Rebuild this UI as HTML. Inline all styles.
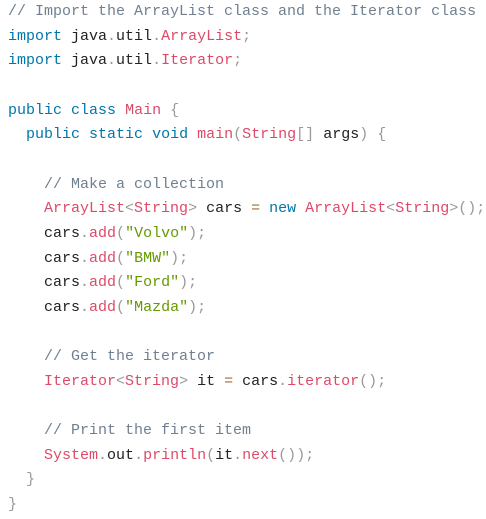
<!DOCTYPE html>
<html><head><style>
html,body{margin:0;padding:0;background:#fff;width:486px;height:519px;overflow:hidden}
pre{margin:0;padding:0 0 0 8px;position:relative;top:0px;font-family:"Liberation Mono",monospace;font-size:15px;line-height:24.65px;color:#222;white-space:pre}
.c{color:#708090}.k{color:#07a}.f{color:#dd4a68}.p{color:#999}.s{color:#690}.o{color:#9a6e3a}
</style></head><body>
<pre><span class="c">// Import the ArrayList class and the Iterator class</span>
<span class="k">import</span> java<span class="p">.</span>util<span class="p">.</span><span class="f">ArrayList</span><span class="p">;</span>
<span class="k">import</span> java<span class="p">.</span>util<span class="p">.</span><span class="f">Iterator</span><span class="p">;</span>

<span class="k">public</span> <span class="k">class</span> <span class="f">Main</span> <span class="p">{</span>
  <span class="k">public</span> <span class="k">static</span> <span class="k">void</span> <span class="f">main</span><span class="p">(</span><span class="f">String</span><span class="p">[</span><span class="p">]</span> args<span class="p">)</span> <span class="p">{</span>

    <span class="c">// Make a collection</span>
    <span class="f">ArrayList</span><span class="p">&lt;</span><span class="f">String</span><span class="p">&gt;</span> cars <span class="o">=</span> <span class="k">new</span> <span class="f">ArrayList</span><span class="p">&lt;</span><span class="f">String</span><span class="p">&gt;</span><span class="p">(</span><span class="p">)</span><span class="p">;</span>
    cars<span class="p">.</span><span class="f">add</span><span class="p">(</span><span class="s">"Volvo"</span><span class="p">)</span><span class="p">;</span>
    cars<span class="p">.</span><span class="f">add</span><span class="p">(</span><span class="s">"BMW"</span><span class="p">)</span><span class="p">;</span>
    cars<span class="p">.</span><span class="f">add</span><span class="p">(</span><span class="s">"Ford"</span><span class="p">)</span><span class="p">;</span>
    cars<span class="p">.</span><span class="f">add</span><span class="p">(</span><span class="s">"Mazda"</span><span class="p">)</span><span class="p">;</span>

    <span class="c">// Get the iterator</span>
    <span class="f">Iterator</span><span class="p">&lt;</span><span class="f">String</span><span class="p">&gt;</span> it <span class="o">=</span> cars<span class="p">.</span><span class="f">iterator</span><span class="p">(</span><span class="p">)</span><span class="p">;</span>

    <span class="c">// Print the first item</span>
    <span class="f">System</span><span class="p">.</span>out<span class="p">.</span><span class="f">println</span><span class="p">(</span>it<span class="p">.</span><span class="f">next</span><span class="p">(</span><span class="p">)</span><span class="p">)</span><span class="p">;</span>
  <span class="p">}</span>
<span class="p">}</span></pre>
</body></html>
